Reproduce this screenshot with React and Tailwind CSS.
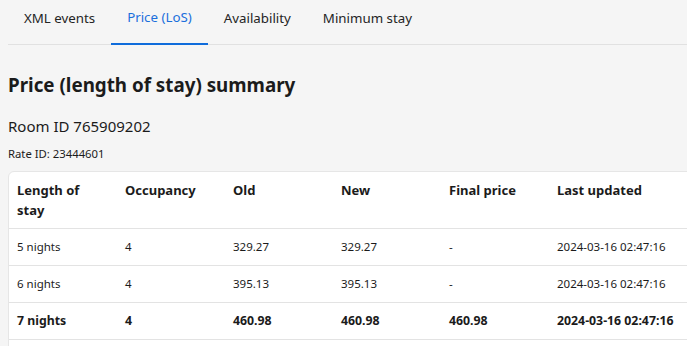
export default function App() {
  const tabs = ["XML events", "Price (LoS)", "Availability", "Minimum stay"];
  const rows = [
    { los: "5 nights", occ: "4", old: "329.27", nw: "329.27", fin: "-", upd: "2024-03-16 02:47:16", bold: false },
    { los: "6 nights", occ: "4", old: "395.13", nw: "395.13", fin: "-", upd: "2024-03-16 02:47:16", bold: false },
    { los: "7 nights", occ: "4", old: "460.98", nw: "460.98", fin: "460.98", upd: "2024-03-16 02:47:16", bold: true },
  ];
  return (
    <div className="min-h-screen bg-[#f5f5f5] text-[#1b1b1b] overflow-hidden" style={{ fontFamily: '"Noto Sans", sans-serif' }}>
      <div className="pl-2">
        <div className="flex border-b border-[#e1e1e1] h-[45px]">
          {tabs.map((t, i) => (
            <div key={t} className={`px-4 flex items-center text-[13.3px] -mb-px ${i === 1 ? "text-[#1a6fdc] border-b-2 border-[#0f6cdb]" : "text-[#242424]"}`}>
              <span className="-mt-[7px]">{t}</span>
            </div>
          ))}
        </div>
      </div>
      <div className="px-2">
        <h1 className="text-[18.8px] font-bold mt-[26px] leading-[28px]">Price (length of stay) summary</h1>
        <div className="text-[15px] mt-[16px] leading-[22px]">Room ID 765909202</div>
        <div className="text-[11.3px] mt-[9px] leading-[16px]">Rate ID: 23444601</div>
        <div className="mt-[9px] bg-white border border-[#e6e6e6] rounded-tl-md w-[760px]">
          <div className="grid grid-cols-[108px_108px_108px_108px_108px_220px] text-[13px] font-bold leading-[20px] h-[56px]">
            <div className="px-2 pt-[8px]">Length of<br />stay</div>
            <div className="px-2 pt-[8px]">Occupancy</div>
            <div className="px-2 pt-[8px]">Old</div>
            <div className="px-2 pt-[8px]">New</div>
            <div className="px-2 pt-[8px]">Final price</div>
            <div className="px-2 pt-[8px]">Last updated</div>
          </div>
          {rows.map((r) => (
            <div key={r.los} className={`grid grid-cols-[108px_108px_108px_108px_108px_220px] border-t border-[#e3e3e3] h-[37px] items-center ${r.bold ? "font-bold text-[12.3px]" : "text-[11.5px]"}`}>
              {[r.los, r.occ, r.old, r.nw, r.fin, r.upd].map((c, i) => (
                <div key={i} className="px-2 leading-[20px]">{c}</div>
              ))}
            </div>
          ))}
          <div className="border-t border-[#e3e3e3] h-4"></div>
        </div>
      </div>
    </div>
  );
}
